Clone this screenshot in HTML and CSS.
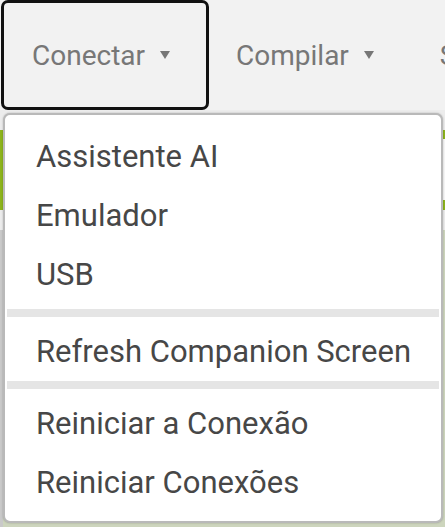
FILE: index.html
```html
<!DOCTYPE html>
<html lang="pt">
<head>
<meta charset="utf-8">
<title>Conectar</title>
<link rel="stylesheet" href="styles.css">
</head>
<body>
<div class="page">
  <header class="topbar">
    <div class="tab tab-first tab-active"><span class="tab-label">Conectar</span><span class="caret"></span></div>
    <div class="tab"><span class="tab-label">Compilar</span><span class="caret"></span></div>
    <div class="tab"><span class="tab-label">Settings</span><span class="caret"></span></div>
  </header>
  <main class="workspace">
    <div class="toolbar"></div>
    <div class="canvas"></div>
  </main>
  <ul class="dropdown">
    <li class="item">Assistente AI</li>
    <li class="item">Emulador</li>
    <li class="item">USB</li>
    <li class="sep sep-first"></li>
    <li class="item">Refresh Companion Screen</li>
    <li class="sep"></li>
    <li class="item">Reiniciar a Conexão</li>
    <li class="item">Reiniciar Conexões</li>
  </ul>
</div>
</body>
</html>
```

FILE: styles.css
```css
* { box-sizing: border-box; }
html, body {
  margin: 0;
  padding: 0;
  width: 445px;
  height: 527px;
  overflow: hidden;
  font-family: Roboto, "Liberation Sans", sans-serif;
}
.page {
  position: relative;
  width: 445px;
  height: 527px;
  overflow: hidden;
  background: #eef0ea;
  display: flex;
  flex-direction: column;
}
.topbar {
  height: 110px;
  flex: none;
  display: flex;
  background: #f2f2f2;
  padding-left: 1px;
  white-space: nowrap;
}
.tab {
  flex: none;
  height: 110px;
  display: flex;
  align-items: center;
  padding: 0 36px 0 24px;
  border: 3px solid transparent;
  border-radius: 7px;
  color: #777;
  font-size: 28px;
}
.tab-first { padding-left: 28px; }
.tab-active { border-color: #111; }
.caret {
  width: 0;
  height: 0;
  margin-left: 15px;
  border-left: 5px solid transparent;
  border-right: 5px solid transparent;
  border-top: 8px solid #777;
}
.workspace {
  flex: 1;
  display: flex;
  flex-direction: column;
  padding-top: 20px;
  background: #ececec;
}
.toolbar {
  height: 80px;
  flex: none;
  background: #f7f7f7;
  border-top: 9px solid #8db41c;
  border-bottom: 10px solid #8db41c;
  border-left: 3px solid #8db41c;
}
.canvas {
  flex: 1;
  margin-top: 20px;
  background: #cdd5bd;
  border-left: 3px solid #c9c9c9;
}
.dropdown {
  position: absolute;
  left: 3px;
  top: 113px;
  width: 440px;
  margin: 0;
  padding: 12px 0 9px;
  list-style: none;
  background: #fff;
  border: 2px solid #b9b9b9;
  border-radius: 7px;
  box-shadow: 0 0 2px rgba(0, 0, 0, 0.25);
}
.item {
  height: 59px;
  line-height: 59px;
  padding-left: 31px;
  font-size: 31px;
  color: #474747;
  white-space: nowrap;
}
.sep {
  height: 8px;
  margin: 0 2px 5px;
  background: #e5e5e5;
}
.sep-first { margin-top: 5px; }
```
